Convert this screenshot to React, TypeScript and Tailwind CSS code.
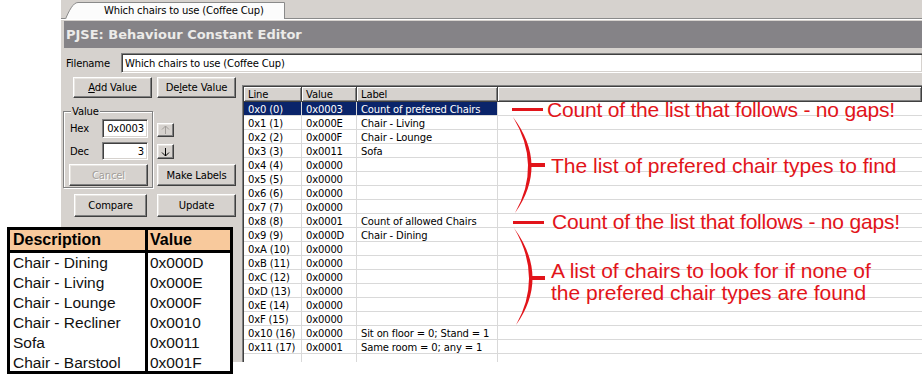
import React from "react";

const rows: [string, string, string][] = [
  ["0x0 (0)", "0x0003", "Count of prefered Chairs"],
  ["0x1 (1)", "0x000E", "Chair - Living"],
  ["0x2 (2)", "0x000F", "Chair - Lounge"],
  ["0x3 (3)", "0x0011", "Sofa"],
  ["0x4 (4)", "0x0000", ""],
  ["0x5 (5)", "0x0000", ""],
  ["0x6 (6)", "0x0000", ""],
  ["0x7 (7)", "0x0000", ""],
  ["0x8 (8)", "0x0001", "Count of allowed Chairs"],
  ["0x9 (9)", "0x000D", "Chair - Dining"],
  ["0xA (10)", "0x0000", ""],
  ["0xB (11)", "0x0000", ""],
  ["0xC (12)", "0x0000", ""],
  ["0xD (13)", "0x0000", ""],
  ["0xE (14)", "0x0000", ""],
  ["0xF (15)", "0x0000", ""],
  ["0x10 (16)", "0x0000", "Sit on floor = 0; Stand = 1"],
  ["0x11 (17)", "0x0001", "Same room = 0; any = 1"],
  ["", "", ""],
];

const chairs: [string, string][] = [
  ["Chair - Dining", "0x000D"],
  ["Chair - Living", "0x000E"],
  ["Chair - Lounge", "0x000F"],
  ["Chair - Recliner", "0x0010"],
  ["Sofa", "0x0011"],
  ["Chair - Barstool", "0x001F"],
];

function Btn({
  children,
  className = "",
  disabled = false,
}: {
  children: React.ReactNode;
  className?: string;
  disabled?: boolean;
}) {
  return (
    <div
      className={`flex shrink-0 items-center justify-center bg-[#d6d2ce] border border-t-white border-l-white border-b-[#404040] border-r-[#404040] shadow-[inset_-1px_-1px_#808080,inset_1px_1px_#e8e5e1] leading-[13px] ${
        disabled ? "text-[#a29e9a] [text-shadow:1px_1px_#ffffff]" : "text-black"
      } ${className}`}
    >
      {children}
    </div>
  );
}

function Field({ children, className = "" }: { children?: React.ReactNode; className?: string }) {
  return (
    <div
      className={`flex items-center bg-white border border-t-[#808080] border-l-[#808080] border-b-white border-r-white shadow-[inset_1px_1px_#404040,inset_-1px_-1px_#d6d2ce] leading-[13px] text-black ${className}`}
    >
      {children}
    </div>
  );
}

function Arrow({ up, color }: { up: boolean; color: string }) {
  return (
    <svg width="9" height="10" viewBox="0 0 9 10">
      {up ? (
        <path d="M4.5 1 L4.5 9 M1 4.5 L4.5 1 L8 4.5" fill="none" stroke={color} strokeWidth="1" />
      ) : (
        <path d="M4.5 1 L4.5 9 M1 5.5 L4.5 9 L8 5.5" fill="none" stroke={color} strokeWidth="1" />
      )}
    </svg>
  );
}

export default function App() {
  const red = "text-[#e2141a]";
  return (
    <div className="relative w-[922px] h-[383px] overflow-hidden bg-white font-['DejaVu_Sans',Tahoma,sans-serif] text-[10px] tracking-[-0.15px] text-black">
      <div className="flex h-[362px]">
        <div className="w-[61px] shrink-0" />
        <div className="flex min-w-0 flex-1 flex-col bg-[#d6d2ce]">
          {/* tab strip */}
          <div className="flex h-[19px] shrink-0">
            <div className="w-[4px] border-b border-[#8a8a8a]" />
            <div className="relative w-[220px]">
              <svg className="absolute inset-0" width="220" height="19" viewBox="0 0 220 19">
                <path d="M0.5 19 C4 11 8 2.5 13 2.5 L219.5 2.5 L219.5 19" fill="#fcfcfc" stroke="#8a8a8a" />
              </svg>
              <div className="relative pl-[39px] pt-[4px] leading-[13px]">Which chairs to use (Coffee Cup)</div>
            </div>
            <div className="flex-1 border-b border-[#8a8a8a]" />
          </div>
          <div className="h-px shrink-0 bg-white" />
          <div className="h-px shrink-0" />
          {/* title bar */}
          <div className="ml-[3px] flex h-[27px] shrink-0 items-center bg-[#858387] pl-[2px] font-['DejaVu_Sans',Verdana,sans-serif] text-[13px] tracking-normal font-bold text-[#ecebe9]">
            PJSE: Behaviour Constant Editor
          </div>
          {/* filename */}
          <div className="mt-[5px] flex h-[20px] shrink-0 items-center">
            <div className="w-[60px] pl-[5px] leading-[13px]">Filename</div>
            <Field className="h-[20px] flex-1 border-r-0 pl-[3px]">Which chairs to use (Coffee Cup)</Field>
          </div>
          {/* main */}
          <div className="flex min-h-0 flex-1">
            {/* left panel */}
            <div className="flex w-[181px] shrink-0 flex-col">
              <div className="mt-[4px] flex">
                <Btn className="ml-[12px] h-[21px] w-[79px]">
                  <span>
                    <span className="underline">A</span>dd Value
                  </span>
                </Btn>
                <Btn className="ml-[5px] h-[21px] w-[79px]">
                  <span>
                    De<span className="underline">l</span>ete Value
                  </span>
                </Btn>
              </div>
              <div className="mt-[13px] flex">
                <div className="relative ml-[2px] flex h-[77px] w-[90px] flex-col border border-[#808080] pl-[5px] pr-[3px] pt-[7px] shadow-[inset_1px_1px_#ffffff,1px_1px_#ffffff]">
                  <div className="absolute left-[7px] top-[-7px] bg-[#d6d2ce] px-[1px] leading-[13px]">Value</div>
                  <div className="flex h-[19px] items-center">
                    <div className="w-[33px] pl-[1px] leading-[13px]">Hex</div>
                    <Field className="h-[19px] w-[46px] justify-end pr-[3px]">0x0003</Field>
                  </div>
                  <div className="mt-[4px] flex h-[18px] items-center">
                    <div className="w-[33px] pl-[1px] leading-[13px]">Dec</div>
                    <Field className="h-[18px] w-[46px] justify-end pr-[3px]">3</Field>
                  </div>
                  <Btn disabled className="mt-[4px] h-[22px] w-[79px]">
                    Cancel
                  </Btn>
                </div>
                <div className="ml-[4px] flex flex-col">
                  <Btn className="mt-[12px] h-[14px] w-[17px]">
                    <Arrow up color="#a29e9a" />
                  </Btn>
                  <Btn className="mt-[7px] h-[15px] w-[17px]">
                    <Arrow up={false} color="#000000" />
                  </Btn>
                  <Btn className="mt-[5px] h-[22px] w-[79px]">Make Labels</Btn>
                </div>
              </div>
              <div className="mt-[6px] flex">
                <Btn className="ml-[13px] h-[23px] w-[73px]">Compare</Btn>
                <Btn className="ml-[10px] h-[23px] w-[79px]">Update</Btn>
              </div>
            </div>
            {/* list view */}
            <div className="mt-[12px] flex min-w-0 flex-1 flex-col overflow-hidden border-l border-t border-[#808080] bg-white pl-px pt-px shadow-[inset_1px_1px_#404040]">
              <div className="flex h-[15px] shrink-0 bg-[#d6d2ce] leading-[13px]">
                {[
                  ["Line", "w-[58px]"],
                  ["Value", "w-[55px]"],
                  ["Label", "w-[141px]"],
                  ["", "flex-1"],
                ].map(([t, w], i) => (
                  <div
                    key={i}
                    className={`${w} flex items-center border-r border-b border-r-[#404040] border-b-[#404040] pl-[4px] shadow-[inset_1px_1px_#ffffff,inset_-1px_-1px_#808080]`}
                  >
                    {t}
                  </div>
                ))}
              </div>
              <div className="flex flex-col">
                {rows.map((r, i) => {
                  const sel = i === 0;
                  const cell = `flex h-[14px] items-center border-r border-b border-[#d9d9d9] pl-[4px] pt-px leading-[13px] whitespace-nowrap ${
                    sel ? "bg-[#0a246a] text-white" : ""
                  }`;
                  return (
                    <div key={i} className="flex shrink-0">
                      <div className={`${cell} w-[58px]`}>{r[0]}</div>
                      <div className={`${cell} w-[55px]`}>{r[1]}</div>
                      <div className={`${cell} w-[141px]`}>{r[2]}</div>
                      <div className="h-[14px] flex-1 border-b border-[#d9d9d9]" />
                    </div>
                  );
                })}
              </div>
            </div>
          </div>
        </div>
      </div>

      {/* description table overlay */}
      <div className="absolute left-[7px] top-[227px] w-[226px] h-[147px] border-[3px] border-black bg-white font-['Liberation_Sans',Arial,sans-serif] tracking-normal text-black">
        <div className="flex h-[23px] border-b-[3px] border-black bg-[#f8c99c] text-[16px] font-bold leading-[20px]">
          <div className="w-[138px] border-r-[3px] border-black pl-[3px]">Description</div>
          <div className="pl-[2px]">Value</div>
        </div>
        {chairs.map(([d, v]) => (
          <div key={d} className="flex h-[20px] text-[15.5px] leading-[20px] text-[#111111]">
            <div className="w-[138px] border-r-[3px] border-black pl-[3px]">{d}</div>
            <div className="pl-[2px]">{v}</div>
          </div>
        ))}
      </div>

      {/* annotations */}
      <svg className="absolute left-0 top-0" width="922" height="383" viewBox="0 0 922 383">
        <rect x="512" y="108" width="31" height="3" fill="#e2141a" />
        <path d="M513 117 Q549 165 515 213 Q542 165 513 117 Z" fill="#e2141a" />
        <rect x="529" y="163" width="16" height="4" fill="#e2141a" />
        <rect x="513" y="221" width="31" height="3" fill="#e2141a" />
        <path d="M514 228 Q550 277 516 325 Q543 277 514 228 Z" fill="#e2141a" />
        <rect x="530" y="276" width="15" height="4" fill="#e2141a" />
      </svg>
      <div className={`absolute left-[547px] top-[99px] whitespace-nowrap font-['Liberation_Sans',Arial,sans-serif] text-[21px] leading-[21px] tracking-[-0.2px] ${red}`}>
        Count of the list that follows - no gaps!
      </div>
      <div className={`absolute left-[551px] top-[155px] whitespace-nowrap font-['Liberation_Sans',Arial,sans-serif] text-[21px] leading-[21px] tracking-normal ${red}`}>
        The list of prefered chair types to find
      </div>
      <div className={`absolute left-[552px] top-[211px] whitespace-nowrap font-['Liberation_Sans',Arial,sans-serif] text-[21px] leading-[21px] tracking-[-0.2px] ${red}`}>
        Count of the list that follows - no gaps!
      </div>
      <div className={`absolute left-[551px] top-[260px] whitespace-nowrap font-['Liberation_Sans',Arial,sans-serif] text-[21px] leading-[22px] tracking-normal ${red}`}>
        A list of chairs to look for if none of
        <br />
        the prefered chair types are found
      </div>
    </div>
  );
}
